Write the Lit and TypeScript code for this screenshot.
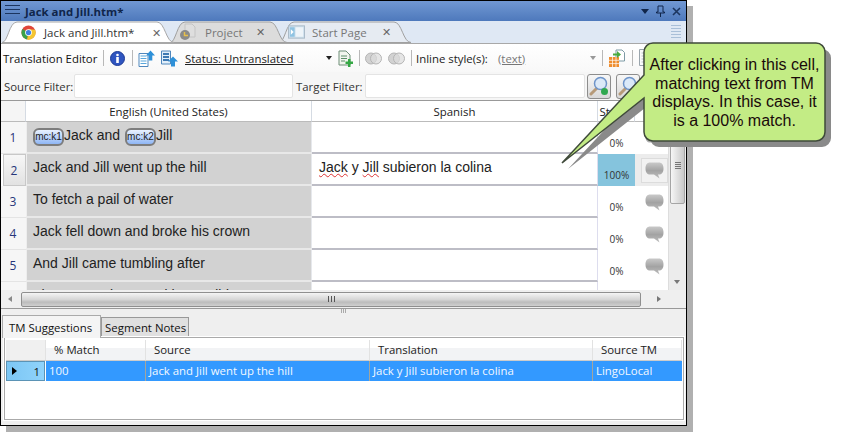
import { LitElement, css, html, svg } from 'lit';
import { customElement } from 'lit/decorators.js';

const chrome = html`<svg width="15" height="15" viewBox="0 0 16 16">
  <circle cx="8" cy="8" r="7.5" fill="#e0463a" />
  <path d="M8 8 L1.5 4.3 A7.5 7.5 0 0 0 6.5 15.4 Z" fill="#3aa14a" />
  <path d="M8 8 L6.5 15.4 A7.5 7.5 0 0 0 15 5 L8 4.5 Z" fill="#f4c631" />
  <circle cx="8" cy="8" r="3.6" fill="#fff" />
  <circle cx="8" cy="8" r="2.8" fill="#3f7fe0" />
</svg>`;

const projectIcon = html`<svg width="18" height="18" viewBox="0 0 18 18">
  <path d="M6 1h7l3 3v10H6z" fill="#dedede" stroke="#c4c4c4" />
  <circle cx="6" cy="12" r="5" fill="#8a8a8a" />
  <path d="M5.5 9v3.5H9" stroke="#e8c04a" stroke-width="1.5" fill="none" />
</svg>`;

const startIcon = html`<svg width="17" height="14" viewBox="0 0 18 14">
  <rect x="0.5" y="0.5" width="17" height="13" fill="#cfe0ee" stroke="#a9b9c6" />
  <rect x="2" y="2" width="5" height="10" fill="#8fc3e2" />
  <path d="M3 4l3 3-3 3z" fill="#fff" />
  <rect x="8" y="2" width="8" height="10" fill="#eef4f9" />
</svg>`;

const info = html`<svg width="15" height="15" viewBox="0 0 15 15">
  <circle cx="7.5" cy="7.5" r="7" fill="#2f55c0" stroke="#1d3a94" />
  <circle cx="7.5" cy="4" r="1.3" fill="#fff" />
  <rect x="6.2" y="6" width="2.6" height="6" fill="#fff" />
</svg>`;

const docUp = html`<svg width="17" height="17" viewBox="0 0 17 17">
  <path d="M1 3.500h9v13H1z" fill="#fff" stroke="#4f87bd" />
  <path d="M2.500 6h6M2.500 8.500h6M2.500 11h6M2.500 13.500h6" stroke="#58a6dc" stroke-width="1.200" />
  <path d="M12.500 0.500l4.500 5h-2.700v5h-3.600v-5H8z" fill="#2e90d8" />
</svg>`;

const listUp = html`<svg width="17" height="17" viewBox="0 0 17 17">
  <path d="M0.500 1h9v13h-9z" fill="#e2effa" stroke="#4f87bd" />
  <path d="M2 4h6M2 7h6M2 10h6" stroke="#3d79b3" stroke-width="2" />
  <path d="M12 6.500l5 5h-3v5h-4v-5H7z" fill="#2e90d8" />
</svg>`;

const docAdd = html`<svg width="15" height="17" viewBox="0 0 15 17">
  <path d="M1 1h7l4 4v10H1z" fill="#f2f6ee" stroke="#6f8f78" />
  <path d="M3 6h6M3 8.500h6M3 11h4" stroke="#5d8f6a" />
  <path d="M10 9h2.500v2.500H15V14h-2.500v3H10v-3H7.500v-2.500H10z" fill="#35a845" />
</svg>`;

const circles = html`<svg width="17" height="13" viewBox="0 0 17 13">
  <circle cx="6" cy="6.500" r="5.500" fill="#d2d2d2" stroke="#b5b5b5" />
  <circle cx="11" cy="6.500" r="5.500" fill="#dcdcdc" fill-opacity="0.7" stroke="#b5b5b5" />
</svg>`;

const exportIcon = html`<svg width="17" height="19" viewBox="0 0 17 19">
  <path d="M8 1h6l2.500 2.500V12H8z" fill="#fff" stroke="#7d9aa5" />
  <path d="M1 8h10v10H1z" fill="#ee8d2e" />
  <path d="M1 11.300h10M1 14.600h10M4.500 8v10M8 8v10" stroke="#fff" stroke-width="0.700" />
  <path d="M5 4.500h4V2l4 3.500L9 9V6.500H5z" fill="#4aab3f" />
</svg>`;

const pageIcon = html`<svg width="14" height="18" viewBox="0 0 14 18">
  <path d="M0.500 0.500h12v16h-12z" fill="#fbfbfb" stroke="#9aa5ad" />
  <path d="M2.500 4h8M2.500 7h8M2.500 10h8M2.500 13h8" stroke="#b9c2c8" />
</svg>`;

const searchIcon = (dot: string) => html`<svg width="20" height="20" viewBox="0 0 20 20">
  <path d="M8 12L2 18" stroke="#b69a79" stroke-width="3" stroke-linecap="round" />
  <circle cx="11.500" cy="7.500" r="6" fill="#dbe9f8" stroke="#6e94c9" stroke-width="1.500" />
  <circle cx="15.500" cy="15.500" r="3.500" fill=${dot} />
</svg>`;

const bubble = html`<svg width="19" height="17" viewBox="0 0 19 17">
  <defs>
    <linearGradient id="bub" x1="0" y1="0" x2="0" y2="1">
      <stop offset="0" stop-color="#c9c9c9" />
      <stop offset="0.500" stop-color="#a3a3a3" />
      <stop offset="1" stop-color="#bdbdbd" />
    </linearGradient>
  </defs>
  <path d="M5 0.500h9c2.600 0 4.500 2 4.500 6s-1.900 6-4.500 6h-1l1.500 4-5.500-4H5C2.400 12.500.5 10.500.5 6.500S2.400.5 5 .5z" fill="url(#bub)" />
</svg>`;

const tabShape = (w: number, fill: string, edge: string) => html`<svg class="tab-shape" width=${w} height="22" viewBox="0 0 ${w} 22">
  ${svg`<path d="M0 21.500C6 21.500 7 1 15 1H${w - 17}C${w - 9} 1 ${w - 8} 21.500 ${w} 21.500Z" fill=${fill} stroke=${edge} />`}
</svg>`;

const rows = [
  { no: 1, text: '', status: '0%' },
  { no: 2, text: 'Jack and Jill went up the hill', status: '100%' },
  { no: 3, text: 'To fetch a pail of water', status: '0%' },
  { no: 4, text: 'Jack fell down and broke his crown', status: '0%' },
  { no: 5, text: 'And Jill came tumbling after', status: '0%' },
  { no: 6, text: 'Then up Jack got and home did trot', status: '0%' },
];

@customElement('app-root')
export class AppRoot extends LitElement {
  static styles = css`
    :host {
      display: block;
      position: relative;
      width: 841px;
      height: 432px;
      overflow: hidden;
      background: #fff;
      font-family: 'Open Sans', 'Noto Sans', sans-serif;
      font-size: 11.400px;
      color: #111;
    }

    .window {
      display: flex;
      flex-direction: column;
      box-sizing: border-box;
      width: 687px;
      height: 426px;
      border: 1px solid #000;
      background: #efefef;
      box-shadow: 6px 6px 0 #b0b0b0;
    }

    .title {
      display: flex;
      align-items: center;
      height: 20px;
      padding: 0 5px 0 4px;
      background: linear-gradient(#7198d3, #4e79bc);
      color: #10254a;
      font-weight: 700;
      font-size: 11.400px;
      flex: none;
    }

    .burger {
      width: 15px;
      height: 12px;
      margin-right: 5px;
      background: repeating-linear-gradient(#1c355f 0 1px, transparent 1px 4px);
    }

    .title-text {
      flex: 1;
    }

    .title-btns {
      display: flex;
      align-items: center;
      gap: 7px;
    }

    .tabs {
      display: flex;
      align-items: flex-end;
      height: 22px;
      padding-left: 1px;
      background: #dfe8f4;
      border-bottom: 1px solid #a8a8a8;
      flex: none;
    }

    .tab {
      position: relative;
      display: flex;
      align-items: center;
      height: 22px;
      color: #777;
      font-size: 11.500px;
      box-sizing: border-box;
    }

    .tab span,
    .tab svg:not(.tab-shape) {
      position: relative;
    }

    .tab-shape {
      position: absolute;
      left: 0;
      top: 0;
    }

    .tab.active {
      z-index: 2;
      color: #333;
      margin-bottom: -1px;
      height: 23px;
    }

    .tab.a {
      width: 172px;
      padding-left: 19px;
    }

    .tab.b {
      width: 117px;
      margin-left: -4px;
      padding-left: 9px;
      z-index: 1;
    }

    .tab.c {
      width: 132px;
      margin-left: -8px;
      padding-left: 9px;
    }

    .tab .x {
      position: absolute;
      font-size: 10.500px;
      color: #666;
    }

    .tab-menu {
      margin-left: auto;
      margin-right: 5px;
      width: 10px;
      height: 14px;
      align-self: center;
      background: repeating-linear-gradient(#a9bfd8 0 1px, transparent 1px 3px);
    }

    .toolbar {
      display: flex;
      align-items: center;
      height: 28px;
      padding-left: 2px;
      background: linear-gradient(#fff, #f8f8f8);
      flex: none;
      white-space: nowrap;
    }

    .sep {
      width: 1px;
      height: 16px;
      background: #b8b8b8;
    }

    .status {
      text-decoration: underline;
      color: #222;
      width: 138px;
    }

    .arrow {
      width: 0;
      height: 0;
      border: 3px solid transparent;
      border-top: 4px solid #222;
      border-bottom: 0;
    }

    .arrow.dim {
      border-top-color: #999;
    }

    .muted {
      color: #777;
      text-decoration: underline;
      width: 92px;
    }

    .filters {
      display: flex;
      align-items: center;
      height: 29px;
      padding-left: 3px;
      background: #f6f6f6;
      border-bottom: 1px solid #999;
      flex: none;
      color: #333;
      white-space: nowrap;
      box-sizing: border-box;
    }

    .input {
      height: 24px;
      box-sizing: border-box;
      border: 1px solid #e4e4e4;
      border-radius: 2px;
      background: #fff;
    }

    .search {
      display: flex;
      align-items: center;
      justify-content: center;
      width: 24px;
      height: 25px;
      box-sizing: border-box;
      border: 1px solid #8d8d8d;
      border-radius: 3px;
      background: linear-gradient(#f7f7f7, #d8d8d8);
    }

    .editor {
      display: flex;
      height: 189px;
      background: #fff;
      flex: none;
    }

    .grid {
      width: 667px;
      overflow: hidden;
      flex: none;
    }

    .grid-row {
      display: grid;
      grid-template-columns: 25px 286px 286px 37px 33px;
    }

    .head > div {
      display: flex;
      align-items: center;
      justify-content: center;
      height: 21px;
      box-sizing: border-box;
      background: #fff;
      border-right: 1px solid #d5dbe3;
      border-bottom: 1px solid #bbb;
      color: #222;
      overflow: hidden;
      white-space: nowrap;
    }

    .head > div:first-child {
      background: #f5f5f5;
    }

    .data > div {
      height: 32px;
      box-sizing: border-box;
    }

    .no {
      display: flex;
      align-items: flex-end;
      justify-content: center;
      padding-bottom: 7px;
      background: #f6f6f6;
      color: #27367a;
      font-size: 12px;
      border-bottom: 1px solid #e4e4e4;
      padding-right: 1px;
    }

    .no.current {
      background: linear-gradient(#f7f7f7, #e2e2e2);
      border: 1px solid #c8c8c8;
      margin-left: 2px;
      padding-bottom: 6px;
    }

    .src {
      display: flex;
      align-items: flex-start;
      padding: 5px 0 0 6px;
      background: #d2d2d2;
      border-left: 1px solid #eee;
      border-right: 1px solid #e6e8ec;
      border-bottom: 2px solid #e8e8e8;
      font: 14px 'Liberation Sans', Arial, sans-serif;
      color: #222;
      white-space: nowrap;
    }

    .pill {
      display: inline-block;
      box-sizing: border-box;
      height: 18px;
      width: 31px;
      text-align: center;
      border: 2px solid #7d7d7d;
      border-radius: 6px;
      background: linear-gradient(#eaf2ff, #8fb6f5);
      font-size: 10px;
      line-height: 14px;
      color: #222;
    }

    .space {
      display: inline-block;
      width: 1px;
    }

    .tgt {
      padding: 5px 0 0 7px;
      border-bottom: 2px solid #bdbdc6;
      border-right: 1px solid #dde;
      font: 14px 'Liberation Sans', Arial, sans-serif;
      color: #222;
      white-space: nowrap;
    }

    .squig {
      text-decoration: underline wavy #d33 1px;
    }

    .pct {
      display: flex;
      align-items: flex-end;
      justify-content: center;
      padding-bottom: 4px;
      font-size: 10px;
      color: #333;
    }

    .pct.hit {
      background: #85c4dd;
    }

    .note {
      display: flex;
      align-items: center;
      justify-content: center;
      padding-left: 5px;
    }

    .note.hit {
      background: #ececec;
    }

    .note.hit svg {
      padding: 3px;
      border: 1px solid #dcdcdc;
      background: #f2f2f2;
    }

    .vscroll {
      position: relative;
      flex: 1;
      background: #ececec;
      border-left: 1px solid #ddd;
    }

    .vthumb {
      margin: 0 1px;
      height: 103px;
      box-sizing: border-box;
      border: 1px solid #a5a5a5;
      border-radius: 2px;
      background: linear-gradient(90deg, #f6f6f6, #c9c9c9);
      display: flex;
      flex-direction: column;
      justify-content: flex-end;
      align-items: center;
      padding-bottom: 34px;
    }

    .grip-h {
      width: 6px;
      height: 7px;
      background: repeating-linear-gradient(#777 0 1px, transparent 1px 2px);
    }

    .down {
      position: absolute;
      left: 5px;
      bottom: 6px;
      border: 3px solid transparent;
      border-top: 4px solid #777;
      border-bottom: 0;
    }

    .hscroll {
      display: flex;
      align-items: center;
      height: 18px;
      background: #efefef;
      border-bottom: 1px solid #999;
      flex: none;
    }

    .left,
    .right {
      width: 0;
      height: 0;
      border: 3px solid transparent;
    }

    .left {
      border-right: 4px solid #888;
      border-left: 0;
      margin: 0 9px 0 7px;
    }

    .right {
      border-left: 4px solid #777;
      border-right: 0;
      margin-left: 16px;
    }

    .hthumb {
      display: flex;
      align-items: center;
      justify-content: center;
      width: 620px;
      height: 15px;
      box-sizing: border-box;
      border: 1px solid #8f8f8f;
      border-radius: 2px;
      background: linear-gradient(#f4f4f4, #d6d6d6 50%, #bcbcbc 70%, #cfcfcf);
    }

    .grip-v {
      width: 7px;
      height: 6px;
      background: repeating-linear-gradient(90deg, #555 0 1px, transparent 1px 3px);
    }

    .lower {
      flex: 1;
      display: flex;
      flex-direction: column;
      min-height: 0;
      padding: 0 2px 5px 3px;
    }

    .split {
      display: flex;
      justify-content: center;
      height: 6px;
      flex: none;
    }

    .split i {
      width: 6px;
      height: 4px;
      background: repeating-linear-gradient(90deg, #aaa 0 1px, transparent 1px 2px);
    }

    .lower-tabs {
      display: flex;
      align-items: flex-end;
      height: 22px;
      margin-left: -2px;
      flex: none;
      color: #111;
    }

    .ltab {
      height: 20px;
      padding: 0 2px 0 3px;
      box-sizing: border-box;
      display: flex;
      align-items: center;
      border: 1px solid #999;
      border-bottom: 0;
      background: #e0e0e0;
    }

    .ltab.on {
      height: 23px;
      padding: 0 8px 0 6px;
      background: #f4f4f4;
      border-color: #aaa;
      margin-bottom: -1px;
      position: relative;
      z-index: 1;
    }

    .table {
      flex: 1;
      border: 1px solid #aaa;
      padding: 2px 1px;
      background: #fff;
      outline: 1px solid #fff;
    }

    .t-row {
      display: grid;
      grid-template-columns: 40px 100px 224px 223px 1fr;
    }

    .t-head > div {
      height: 21px;
      box-sizing: border-box;
      padding-left: 8px;
      line-height: 19px;
      background: linear-gradient(#fff 40%, #f2f3f5 40%);
      border-right: 1px solid #e2e2e2;
      border-bottom: 1px solid #ccc;
      color: #222;
    }

    .t-head > div:first-child {
      background: #f0f0f0;
    }

    .t-data > div {
      height: 20px;
      box-sizing: border-box;
      padding-left: 3px;
      line-height: 19px;
      background: #3399ff;
      color: #f2f8ff;
      border-right: 1px solid #a3a59c;
    }

    .t-data .sel {
      display: flex;
      align-items: center;
      justify-content: space-between;
      padding: 0 4px 0 5px;
      background: linear-gradient(90deg, #7cc6f4, #8fd3fb);
      border: 1px solid #5b93b5;
      color: #111;
      margin-right: 1px;
    }

    .tri {
      border: 4px solid transparent;
      border-left: 5px solid #000;
      border-right: 0;
    }

    .callout {
      position: absolute;
      left: 555px;
      top: 35px;
    }

    .callout-text {
      position: absolute;
      left: 643px;
      top: 56px;
      width: 183px;
      text-align: center;
      font: 16px/18.700px 'Liberation Sans', Arial, sans-serif;
      color: #1a0a0a;
    }
  `;

  renderRow(r: (typeof rows)[number]) {
    const hit = r.no === 2;
    return html`<div class="grid-row data">
      <div class="no ${hit ? 'current' : ''}">${r.no}</div>
      <div class="src">
        ${r.no === 1
          ? html`<span><span class="pill">mc:k1</span>Jack and <span class="space"></span><span class="pill">mc:k2</span>Jill</span>`
          : r.text}
      </div>
      <div class="tgt">
        ${hit ? html`<span class="squig">Jack</span> y <span class="squig">Jill</span> subieron la colina` : ''}
      </div>
      <div class="pct ${hit ? 'hit' : ''}">${r.status}</div>
      <div class="note ${hit ? 'hit' : ''}">${bubble}</div>
    </div>`;
  }

  render() {
    return html`
      <div class="window">
        <div class="title">
          <div class="burger"></div>
          <div class="title-text">Jack and Jill.htm*</div>
          <div class="title-btns">
            <div class="arrow" style="border-width:5px 4px 0;border-top-color:#10254a"></div>
            <svg width="9" height="12" viewBox="0 0 9 12"><path d="M2 1h5v6h1.500v1H.5V7H2zM4.500 8v4" stroke="#10254a" fill="none" /></svg>
            <svg width="9" height="9" viewBox="0 0 9 9"><path d="M1 1l7 7M8 1L1 8" stroke="#1c355f" stroke-width="1.600" /></svg>
          </div>
        </div>

        <div class="tabs">
          <div class="tab a active">
            ${tabShape(172, '#fff', '#a8a8a8')}${chrome}
            <span style="margin-left:8px">Jack and Jill.htm*</span>
            <span class="x" style="left:150px">✕</span>
          </div>
          <div class="tab b">
            ${tabShape(117, '#dcdcdc', '#a0a0a0')}${projectIcon}
            <span style="margin-left:8px">Project</span>
            <span class="x" style="left:86px">✕</span>
          </div>
          <div class="tab c">
            ${tabShape(132, '#e6ebf2', '#a0a0a0')}${startIcon}
            <span style="margin-left:7px">Start Page</span>
            <span class="x" style="left:103px">✕</span>
          </div>
          <div class="tab-menu"></div>
        </div>

        <div class="toolbar">
          <span style="width:99px">Translation Editor</span>
          <div class="sep" style="margin:0 6px 0 1px"></div>
          ${info}
          <div class="sep" style="margin:0 5px 0 7px"></div>
          ${docUp}
          <span style="width:6px"></span>
          ${listUp}
          <span style="width:7px"></span>
          <span class="status">Status: Untranslated</span>
          <span style="width:3px"></span>
          <div class="arrow"></div>
          <span style="width:6px"></span>
          ${docAdd}
          <div class="sep" style="margin:0 5px 0 6px"></div>
          ${circles}
          <span style="width:6px"></span>
          ${circles}
          <div class="sep" style="margin:0 4px 0 6px"></div>
          <span style="width:82px;color:#222">Inline style(s):</span>
          <span class="muted">(text)</span>
          <div class="arrow dim"></div>
          <div class="sep" style="margin:0 5px 0 6px"></div>
          ${exportIcon}
          <div class="sep" style="margin:0 6px 0 7px"></div>
          ${pageIcon}
        </div>

        <div class="filters">
          <span style="width:70px">Source Filter:</span>
          <div class="input" style="width:219px"></div>
          <span style="width:69px;margin-left:3px">Target Filter:</span>
          <div class="input" style="width:220px"></div>
          <div class="search" style="margin-left:2px">${searchIcon('#2fa84f')}</div>
          <div class="search" style="margin-left:5px">${searchIcon('#d9534f')}</div>
        </div>

        <div class="editor">
          <div class="grid">
            <div class="grid-row head">
              <div></div>
              <div>English (United States)</div>
              <div>Spanish</div>
              <div>Status</div>
              <div></div>
            </div>
            ${rows.map((r) => this.renderRow(r))}
          </div>
          <div class="vscroll">
            <div class="vthumb"><div class="grip-h"></div></div>
            <div class="down"></div>
          </div>
        </div>

        <div class="hscroll">
          <div class="left"></div>
          <div class="hthumb"><div class="grip-v"></div></div>
          <div class="right"></div>
        </div>

        <div class="lower">
          <div class="split"><i></i></div>
          <div class="lower-tabs">
            <div class="ltab on">TM Suggestions</div>
            <div class="ltab">Segment Notes</div>
          </div>
          <div class="table">
            <div class="t-row t-head">
              <div></div>
              <div>% Match</div>
              <div>Source</div>
              <div>Translation</div>
              <div>Source TM</div>
            </div>
            <div class="t-row t-data">
              <div class="sel"><span class="tri"></span>1</div>
              <div>100</div>
              <div>Jack and Jill went up the hill</div>
              <div>Jack y Jill subieron la colina</div>
              <div style="border:0">LingoLocal</div>
            </div>
          </div>
        </div>
      </div>

      <svg class="callout" width="285" height="125" viewBox="555 35 285 125" style="overflow:visible">
        <path transform="translate(6 6)" d="M653 43H816a9 9 0 0 1 9 9V132a9 9 0 0 1-9 9H653a9 9 0 0 1-9-9V98L562 163L644 75V52a9 9 0 0 1 9-9Z" fill="#8a8a8a" />
        <path d="M653 43H816a9 9 0 0 1 9 9V132a9 9 0 0 1-9 9H653a9 9 0 0 1-9-9V98L562 163L644 75V52a9 9 0 0 1 9-9Z" fill="#c3ec85" stroke="#3f4a3a" stroke-width="1.500" />
      </svg>
      <div class="callout-text">
        After clicking in this cell,<br />matching text from TM<br />displays. In this case, it<br />is a 100% match.
      </div>
    `;
  }
}
